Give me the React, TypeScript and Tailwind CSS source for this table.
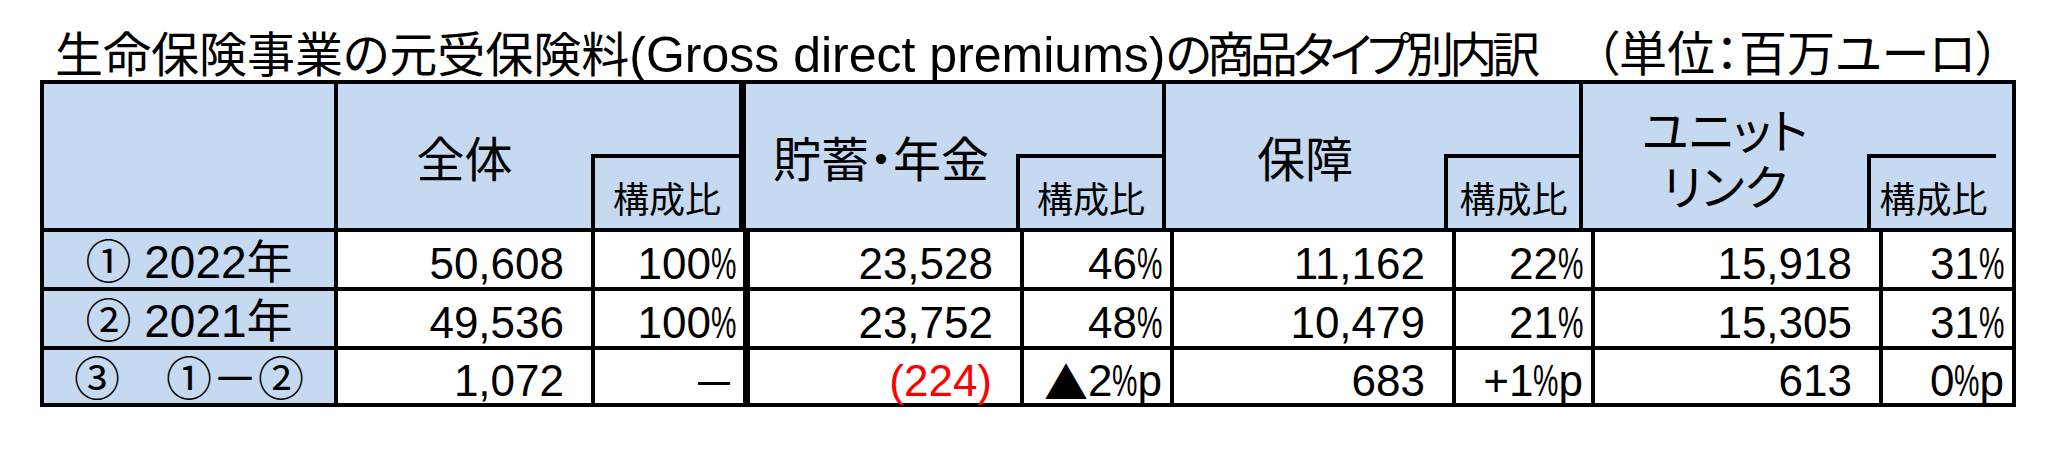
import React from "react";

function PctVal({ v, p }: { v: string; p?: boolean }) {
  return (
    <>
      {v}
      <span className="inline-block origin-left scale-x-[0.65] -mr-[14px]">%</span>
      {p ? "p" : ""}
    </>
  );
}

type Col = { w: string; border: string; pad: string };

const cols: Col[] = [
  { w: "w-[257px]", border: "border-r-4", pad: "pr-[27px]" },
  { w: "w-[155px]", border: "border-r-[7px]", pad: "pr-[7px]" },
  { w: "w-[274px]", border: "border-r-4", pad: "pr-[27px]" },
  { w: "w-[150px]", border: "border-r-4", pad: "pr-[8px]" },
  { w: "w-[282px]", border: "border-r-4", pad: "pr-[27px]" },
  { w: "w-[139px]", border: "border-r-4", pad: "pr-[8px]" },
  { w: "w-[288px]", border: "border-r-4", pad: "pr-[27px]" },
  { w: "w-[129px]", border: "border-r-0", pad: "pr-[8px]" },
];

function DataRow({ label, cells, last }: { label: string; cells: React.ReactNode[]; last?: boolean }) {
  return (
    <div className={`flex border-black ${last ? "h-[53px]" : "h-[59px] border-b-4"}`}>
      <div className="w-[294px] shrink-0 border-r-4 border-black bg-[#c5d9f1] flex items-center justify-center text-[46px] leading-none pt-[4px] whitespace-pre">
        {label}
      </div>
      {cells.map((c, i) => (
        <div
          key={i}
          className={`shrink-0 ${cols[i].w} ${cols[i].border} ${cols[i].pad} border-black bg-white flex items-center justify-end text-[44px] leading-none pt-[9px] whitespace-pre`}
        >
          {c}
        </div>
      ))}
    </div>
  );
}

function SubHeader({ w, border }: { w: string; border: string }) {
  return (
    <div className={`${w} ${border} shrink-0 border-black flex flex-col`}>
      <div className="h-[70px]" />
      <div className="h-[74px] border-l-4 border-t-4 border-black flex items-center justify-center text-[36px] leading-none pt-[8px] font-['Noto_Sans_CJK_JP',sans-serif]">
        構成比
      </div>
    </div>
  );
}

function MainHeader({ w, children }: { w: string; children: React.ReactNode }) {
  return (
    <div
      className={`${w} shrink-0 flex flex-col items-center justify-center text-[48px] leading-[56px] font-['Noto_Sans_CJK_JP',sans-serif] [font-feature-settings:'palt']`}
    >
      {children}
    </div>
  );
}

export default function App() {
  return (
    <div className="w-[2056px] h-[450px] bg-white text-black overflow-hidden font-['Liberation_Sans','Noto_Sans_CJK_JP',sans-serif]">
      <div className="h-[80px] pt-[31px] pl-[55px] pr-[56px] flex justify-between text-[48px] leading-[48px] whitespace-pre [font-feature-settings:'palt']">
        <span>
          生命保険事業の元受保険料<span className="text-[50px]">(Gross direct premiums)</span>
          <span className="tracking-[-5px]">の商品タイプ別内訳</span>
        </span>
        <span>（単位：百万ユーロ）</span>
      </div>
      <div className="ml-[40px] w-[1976px] border-4 border-black flex flex-col">
        <div className="flex h-[148px] border-b-4 border-black bg-[#c5d9f1]">
          <div className="w-[294px] shrink-0 border-r-4 border-black" />
          <MainHeader w="w-[253px]">全体</MainHeader>
          <SubHeader w="w-[155px]" border="border-r-[7px]" />
          <MainHeader w="w-[270px]">貯蓄・年金</MainHeader>
          <SubHeader w="w-[150px]" border="border-r-4" />
          <MainHeader w="w-[278px]">保障</MainHeader>
          <SubHeader w="w-[139px]" border="border-r-4" />
          <MainHeader w="w-[284px]">
            <span>ユニット</span>
            <span>リンク</span>
          </MainHeader>
          <SubHeader w="w-[129px]" border="border-r-0" />
        </div>
        <DataRow
          label="① 2022年"
          cells={[
            "50,608",
            <PctVal v="100" />,
            "23,528",
            <PctVal v="46" />,
            "11,162",
            <PctVal v="22" />,
            "15,918",
            <PctVal v="31" />,
          ]}
        />
        <DataRow
          label="② 2021年"
          cells={[
            "49,536",
            <PctVal v="100" />,
            "23,752",
            <PctVal v="48" />,
            "10,479",
            <PctVal v="21" />,
            "15,305",
            <PctVal v="31" />,
          ]}
        />
        <DataRow
          last
          label="③　①－②"
          cells={[
            "1,072",
            <span className="font-['Noto_Sans_CJK_JP',sans-serif]">－</span>,
            <span className="text-[#ff0000] pr-[1px]">(224)</span>,
            <>
              <span className="font-['Noto_Sans_CJK_JP',sans-serif]">▲</span>
              <PctVal v="2" p />
            </>,
            "683",
            <>
              +<PctVal v="1" p />
            </>,
            "613",
            <PctVal v="0" p />,
          ]}
        />
      </div>
    </div>
  );
}
